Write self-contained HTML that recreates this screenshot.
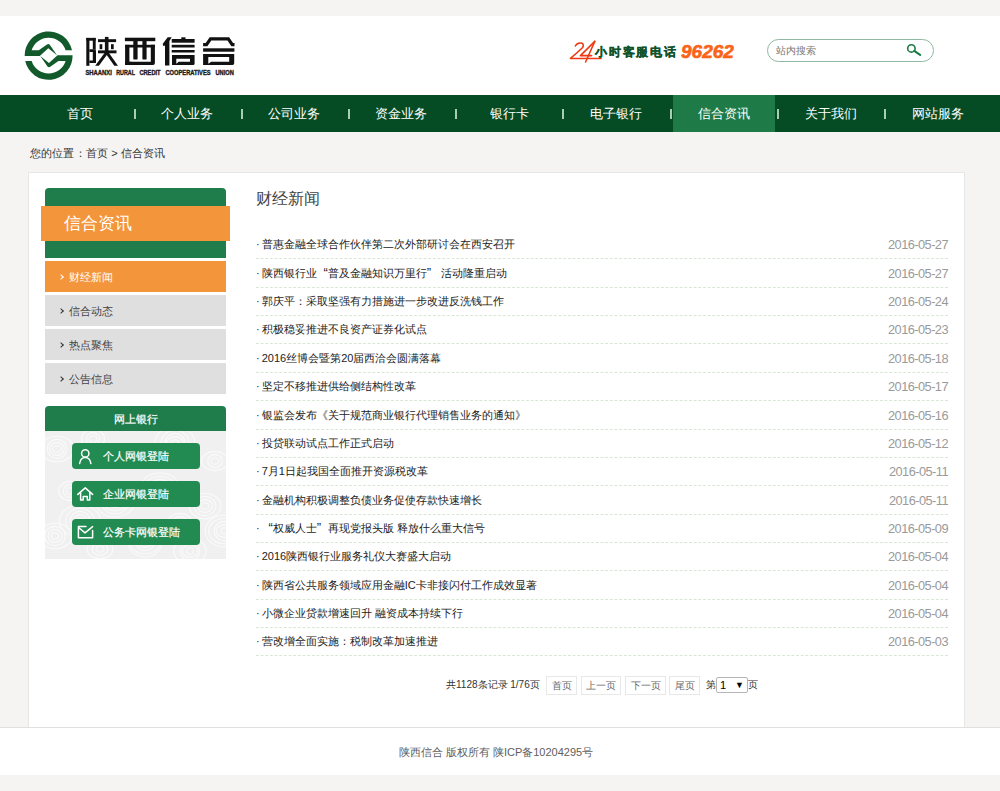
<!DOCTYPE html>
<html><head><meta charset="utf-8">
<style>
*{margin:0;padding:0;box-sizing:border-box}
html,body{width:1000px;height:791px;overflow:hidden;background:#f5f4f2;font-family:"Liberation Sans",sans-serif;color:#333}
.abs{position:absolute}
#header{position:absolute;left:0;top:16px;width:1000px;height:79px;background:#fff}
#nav{position:absolute;left:0;top:95px;width:1000px;height:37px;background:#054b23}
#nav .it{position:absolute;top:0;height:37px;line-height:38px;width:102px;text-align:center;color:#fff;font-size:13px}
#nav .on{background:#1e7b47}
#nav .sep{position:absolute;top:14px;width:2px;height:10px;background:#a8cdb0}
#crumb{position:absolute;left:30px;top:145px;font-size:11px;color:#333;line-height:16px;letter-spacing:0.15px}
#box{position:absolute;left:28px;top:172px;width:937px;height:560px;background:#fff;border:1px solid #e6e6e6}
#footer{position:absolute;left:0;top:727px;width:1000px;height:48px;background:#fff;border-top:1px solid #e0e0e0;text-align:center;font-size:11px;color:#5e5e5e;line-height:48px;padding-right:8px}
.logo-cn{position:absolute;left:84px;top:30px;font-size:35px;font-weight:900;letter-spacing:3px;color:#1a1a1a;line-height:40px}
.logo-en{position:absolute;left:86px;top:68px;font-size:7px;font-weight:bold;color:#1a1a1a;line-height:9px;letter-spacing:0.35px;white-space:nowrap}
.hot{position:absolute;left:595px;top:42px;font-size:12.4px;font-weight:bold;color:#11522a;line-height:20px;-webkit-text-stroke:0.3px #11522a;letter-spacing:1.75px}
.hot24{position:absolute;left:569px;top:38px;font-size:23px;font-style:italic;color:#e8431e;line-height:26px;letter-spacing:-3px}
.hotnum{position:absolute;left:681px;top:40px;font-size:19px;font-weight:bold;font-style:italic;color:#fa6418;line-height:24px;-webkit-text-stroke:0.6px #fa6418}
.search{position:absolute;left:767px;top:39px;width:167px;height:23px;border:1px solid #8fb9a0;border-radius:12px;background:#fff}
.search span{position:absolute;left:8px;top:0;line-height:21px;font-size:10px;color:#777}
/* sidebar */
.sbhead{position:absolute;left:45px;top:188px;width:181px;height:70px;background:#1e7d4a;border-radius:4px 4px 0 0}
.sbtitle{position:absolute;left:41px;top:206px;width:189px;height:35px;background:#f3953b;color:#fff;font-size:17px;line-height:36px;padding-left:23px}
.sbit{position:absolute;left:45px;width:181px;height:31px;background:#dfdfdf;font-size:10.8px;line-height:33px;color:#444;padding-left:24px}
.sbit:before{content:"";position:absolute;left:14px;top:14px;width:3px;height:3px;border-right:1px solid #333;border-top:1px solid #333;transform:rotate(45deg)}
.sbit.cur{background:#f3953b;color:#fff}
.sbit.cur:before{border-color:#fff}
.ebhead{position:absolute;left:45px;top:406px;width:181px;height:25px;background:#1e7d4a;border-radius:4px 4px 0 0;color:#fff;font-size:11px;line-height:27px;text-align:center;-webkit-text-stroke:0.2px #fff}
.ebbody{position:absolute;left:45px;top:431px;width:181px;height:128px;background:#f0f0f0;overflow:hidden}
.btn{position:absolute;left:72px;width:128px;height:26px;background:#218b52;border-radius:4px;color:#fff;font-size:11px;line-height:27px;padding-left:31px;-webkit-text-stroke:0.2px #fff}
.btn svg{position:absolute;left:5px;top:4px}
/* list */
.ctitle{position:absolute;left:256px;top:188px;font-size:16px;color:#444;line-height:22px}
.row{position:absolute;left:256px;width:692px;height:28.36px}
.row .t{position:absolute;top:0;line-height:28px;font-size:11px;color:#222;white-space:nowrap;left:-1px}
.row .d{position:absolute;right:0;top:0;line-height:28px;font-size:12.8px;color:#9a9a9a;letter-spacing:-0.55px;line-height:29px}
.row:after{content:"";position:absolute;left:0;top:28px;width:692px;height:1px;background-image:linear-gradient(to right,#d9e6d3 60%,transparent 60%);background-size:4.66px 1px}
.ql,.qr{font-style:normal;display:inline-block;width:11px;font-size:13px;line-height:10px}.ql{text-align:right}.qr{text-align:left}
.dt{font-weight:normal;position:relative;left:1px}
.pager{position:absolute;top:676px;height:18px;font-size:11px;line-height:18px;color:#333}
.pbtn{position:absolute;top:676px;height:19px;border:1px solid #e8e8e8;font-size:10px;line-height:18px;color:#6a6a6a;text-align:center}
.sel{position:absolute;left:716px;top:677px;width:32px;height:16px;border:1px solid #b5b5b5;border-radius:2px;font-size:11px;line-height:14px;padding-left:3px;color:#000}
</style></head>
<body>
<div id="header">
</div>
<svg class="abs" style="left:22px;top:29px" width="52" height="52" viewBox="0 0 791 791">
  <g fill="#125a2c">
  <path id="lp" d="M761 325 A364 364 0 0 0 41 410 L270 410 L400 292 L532 398 L422 238 Q402 220 380 236 L255 325 L147 325 A270 270 0 0 1 663 325 Z"/>
  <use href="#lp" transform="rotate(180 405 405)"/>
  </g>
</svg>
<svg class="abs" style="left:0;top:0" width="260" height="90" viewBox="0 0 260 90">
  <g fill="#111">
    <!-- 陕 -->
    <rect x="86.3" y="37.9" width="3.1" height="27.9"/>
    <rect x="86.3" y="37.9" width="9.4" height="2.8"/>
    <rect x="92.8" y="37.9" width="2.9" height="11.4"/>
    <path d="M89.4 49.2 L95.7 49.2 L96 51.7 L96 62.9 L89.4 62.9 L89.4 60.4 L92.8 60.4 L92.8 52.1 L89.4 52.1 Z"/>
    <rect x="98" y="39.2" width="18.1" height="2.9"/>
    <rect x="104.9" y="36.9" width="3.6" height="15"/>
    <rect x="99.6" y="44.2" width="2.7" height="5"/>
    <rect x="111" y="44.2" width="2.7" height="5"/>
    <rect x="98" y="50.4" width="18.5" height="2.9"/>
    <path d="M104.9 52.5 L108.6 52.5 L98.9 65.8 L95.2 65.8 Z"/>
    <path d="M105 52.5 L108.6 52.5 L118 65.8 L114.3 65.8 Z"/>
    <!-- 西 -->
    <rect x="124.9" y="37.7" width="30.4" height="3.5"/>
    <rect x="125.1" y="44.8" width="29.8" height="2.7"/>
    <rect x="125.1" y="44.8" width="4.3" height="20.2"/>
    <path d="M150.8 44.8 L154.9 44.8 L154.9 63 Q154.9 65 152.9 65 L125.1 65 L125.1 61.7 L150.8 61.7 Z"/>
    <path d="M129.4 63.2 L131.3 61.7 L129.4 61.7 Z"/>
    <path d="M133.3 41 L137.6 41 L137.6 58.4 Q137.6 59.6 136.4 59.6 L134.5 59.6 Q133.3 59.6 133.3 58.4 Z"/>
    <path d="M142.4 41 L146.6 41 L146.6 58.4 Q146.6 59.6 145.4 59.6 L143.6 59.6 Q142.4 59.6 142.4 58.4 Z"/>
    <!-- 信 -->
    <path d="M167.7 37.3 L171.7 37.3 L169.4 41 L169.4 65.4 L165 65.4 L165 45.8 L163 45.8 L162.8 43.8 Z"/>
    <rect x="181.3" y="37.3" width="4.2" height="2.5"/>
    <rect x="171.7" y="39" width="22.9" height="3.7"/>
    <rect x="171.7" y="44.8" width="22.9" height="2.7"/>
    <rect x="171.7" y="50" width="22.9" height="2.5"/>
    <path fill-rule="evenodd" d="M172 55 L194.6 55 L194.6 63.5 Q194.6 65 193.1 65 L172 65 Z M176.3 58.8 L190 58.8 L190 61.7 L178.8 61.7 L176.3 63.7 Z"/>
    <!-- 合 -->
    <path fill="none" stroke="#111" stroke-width="3.2" d="M203.1 44.7 L206.5 44.7 L210.5 38.8 L228.3 38.8 L232.2 44.7 L234.5 44.7"/>
    <rect x="203.1" y="48.3" width="31.3" height="3.4"/>
    <path fill-rule="evenodd" d="M203.1 54 L234.2 54 L234.2 63.3 Q234.2 65 232.5 65 L203.1 65 Z M208.3 57.1 L229.2 57.1 L229.2 61.7 L211.2 61.7 L208.3 63.8 Z"/>
  </g>
  <g font-family="Liberation Sans" font-weight="bold" font-size="6.8" fill="#1a1a1a" stroke="#1a1a1a" stroke-width="0.35">
    <text x="85.4" y="74.8" textLength="26.400000000000002" lengthAdjust="spacingAndGlyphs">SHAANXI</text>
    <text x="116.2" y="74.8" textLength="18.8" lengthAdjust="spacingAndGlyphs">RURAL</text>
    <text x="139.39999999999998" y="74.8" textLength="21.200000000000003" lengthAdjust="spacingAndGlyphs">CREDIT</text>
    <text x="165.39999999999998" y="74.8" textLength="45.2" lengthAdjust="spacingAndGlyphs">COOPERATIVES</text>
    <text x="215.39999999999998" y="74.8" textLength="18.400000000000002" lengthAdjust="spacingAndGlyphs">UNION</text>
  </g>
</svg>
<svg class="abs" style="left:560px;top:30px" width="50" height="40" viewBox="560 30 50 40">
  <g fill="none" stroke="#ee3a12" stroke-width="1.55" stroke-linejoin="round" stroke-linecap="round">
    <path d="M575.3 46 C576.6 43.6 579.2 42.8 581.3 43.1 C583.6 43.5 583.9 45.8 582.4 47.8 Q576.5 53.5 570.4 58.4 L601 58.4"/>
    <path d="M594.8 41.4 L580.4 55.6 L591.6 55.6"/>
    <path d="M594.8 41.4 L585.6 62"/>
  </g>
</svg>
<div class="hot">小时客服电话</div>
<div class="hotnum">96262</div>
<div class="search"><span>站内搜索</span>
<svg class="abs" style="left:138px;top:3px" width="18" height="14" viewBox="0 0 18 14"><circle cx="5.4" cy="5.4" r="3.7" fill="none" stroke="#1a7a45" stroke-width="1.6"/><path d="M8.3 7.9 L14.1 11.8" stroke="#1a7a45" stroke-width="2.1" stroke-linecap="round"/></svg>
</div>
<div id="nav">
  <div class="it" style="left:29px">首页</div>
  <div class="it" style="left:136px">个人业务</div>
  <div class="it" style="left:243px">公司业务</div>
  <div class="it" style="left:350px">资金业务</div>
  <div class="it" style="left:458px">银行卡</div>
  <div class="it" style="left:565px">电子银行</div>
  <div class="it on" style="left:673px">信合资讯</div>
  <div class="it" style="left:780px">关于我们</div>
  <div class="it" style="left:887px">网站服务</div>
  <div class="sep" style="left:134px"></div>
  <div class="sep" style="left:241px"></div>
  <div class="sep" style="left:348px"></div>
  <div class="sep" style="left:455px"></div>
  <div class="sep" style="left:562px"></div>
  <div class="sep" style="left:670px"></div>
  <div class="sep" style="left:777px"></div>
  <div class="sep" style="left:884px"></div>
</div>
<div id="crumb">您的位置：首页 &gt; 信合资讯</div>
<div id="box"></div>
<div class="sbhead"></div>
<div class="sbtitle">信合资讯</div>
<div class="sbit cur" style="top:261px">财经新闻</div>
<div class="sbit" style="top:295px">信合动态</div>
<div class="sbit" style="top:329px">热点聚焦</div>
<div class="sbit" style="top:363px">公告信息</div>
<div class="ebhead">网上银行</div>
<div class="ebbody"><svg width="181" height="128" viewBox="0 0 181 128"><g fill="none" stroke="#fafafa" stroke-width="1.1"><ellipse cx="12" cy="18" rx="4.4" ry="3.2"/><ellipse cx="12" cy="18" rx="7.4" ry="6.4"/><ellipse cx="12" cy="18" rx="9.8" ry="9.6"/><ellipse cx="12" cy="18" rx="17.0" ry="12.8"/><ellipse cx="48" cy="8" rx="3.7" ry="3.2"/><ellipse cx="48" cy="8" rx="6.5" ry="6.4"/><ellipse cx="48" cy="8" rx="11.5" ry="9.6"/><ellipse cx="88" cy="28" rx="3.3" ry="3.2"/><ellipse cx="88" cy="28" rx="7.5" ry="6.4"/><ellipse cx="88" cy="28" rx="10.5" ry="9.6"/><ellipse cx="130" cy="12" rx="3.7" ry="3.2"/><ellipse cx="130" cy="12" rx="8.5" ry="6.4"/><ellipse cx="130" cy="12" rx="10.1" ry="9.6"/><ellipse cx="130" cy="12" rx="13.9" ry="12.8"/><ellipse cx="130" cy="12" rx="20.0" ry="16.0"/><ellipse cx="170" cy="30" rx="3.9" ry="3.2"/><ellipse cx="170" cy="30" rx="7.4" ry="6.4"/><ellipse cx="170" cy="30" rx="13.3" ry="9.6"/><ellipse cx="25" cy="60" rx="3.9" ry="3.2"/><ellipse cx="25" cy="60" rx="6.7" ry="6.4"/><ellipse cx="25" cy="60" rx="11.2" ry="9.6"/><ellipse cx="70" cy="70" rx="3.4" ry="3.2"/><ellipse cx="70" cy="70" rx="7.2" ry="6.4"/><ellipse cx="70" cy="70" rx="12.7" ry="9.6"/><ellipse cx="70" cy="70" rx="13.7" ry="12.8"/><ellipse cx="70" cy="70" rx="19.7" ry="16.0"/><ellipse cx="115" cy="58" rx="3.4" ry="3.2"/><ellipse cx="115" cy="58" rx="6.6" ry="6.4"/><ellipse cx="115" cy="58" rx="12.3" ry="9.6"/><ellipse cx="115" cy="58" rx="15.7" ry="12.8"/><ellipse cx="115" cy="58" rx="20.0" ry="16.0"/><ellipse cx="160" cy="75" rx="4.1" ry="3.2"/><ellipse cx="160" cy="75" rx="7.5" ry="6.4"/><ellipse cx="160" cy="75" rx="10.8" ry="9.6"/><ellipse cx="160" cy="75" rx="15.8" ry="12.8"/><ellipse cx="10" cy="105" rx="3.7" ry="3.2"/><ellipse cx="10" cy="105" rx="7.0" ry="6.4"/><ellipse cx="10" cy="105" rx="10.3" ry="9.6"/><ellipse cx="10" cy="105" rx="16.8" ry="12.8"/><ellipse cx="55" cy="118" rx="3.9" ry="3.2"/><ellipse cx="55" cy="118" rx="7.7" ry="6.4"/><ellipse cx="55" cy="118" rx="13.0" ry="9.6"/><ellipse cx="100" cy="110" rx="3.8" ry="3.2"/><ellipse cx="100" cy="110" rx="8.0" ry="6.4"/><ellipse cx="100" cy="110" rx="9.9" ry="9.6"/><ellipse cx="100" cy="110" rx="15.4" ry="12.8"/><ellipse cx="100" cy="110" rx="17.1" ry="16.0"/><ellipse cx="145" cy="120" rx="3.4" ry="3.2"/><ellipse cx="145" cy="120" rx="7.7" ry="6.4"/><ellipse cx="145" cy="120" rx="9.8" ry="9.6"/><ellipse cx="145" cy="120" rx="16.2" ry="12.8"/><ellipse cx="180" cy="100" rx="3.9" ry="3.2"/><ellipse cx="180" cy="100" rx="8.6" ry="6.4"/><ellipse cx="180" cy="100" rx="10.8" ry="9.6"/><ellipse cx="180" cy="100" rx="16.4" ry="12.8"/><ellipse cx="180" cy="100" rx="19.8" ry="16.0"/><ellipse cx="35" cy="90" rx="4.2" ry="3.2"/><ellipse cx="35" cy="90" rx="6.6" ry="6.4"/><ellipse cx="35" cy="90" rx="10.0" ry="9.6"/><ellipse cx="35" cy="90" rx="14.2" ry="12.8"/><ellipse cx="35" cy="90" rx="20.5" ry="16.0"/><ellipse cx="135" cy="92" rx="3.3" ry="3.2"/><ellipse cx="135" cy="92" rx="8.2" ry="6.4"/><ellipse cx="135" cy="92" rx="12.1" ry="9.6"/></g></svg></div>
<div class="btn" style="top:443px">个人网银登陆</div>
<div class="btn" style="top:481px">企业网银登陆</div>
<div class="btn" style="top:519px">公务卡网银登陆</div>
<svg class="abs" style="left:0;top:0" width="120" height="560" viewBox="0 0 120 560">
  <g fill="none" stroke="#fff" stroke-width="1.5" stroke-linejoin="round" stroke-linecap="round">
    <circle cx="85.25" cy="453.4" r="3.7"/>
    <path d="M79.6 463.6 Q80.5 457.6 85.25 457.6 Q90 457.6 90.9 463.6"/>
    <path d="M77.8 494.4 L85.25 487.9 L92.6 494.4 M89.8 492 L89.8 500.1 L87.3 500.1 L87.3 496.6 L83.2 496.6 L83.2 500.1 L80.6 500.1 L80.6 492"/>
    <path d="M86 526.6 L78.4 526.6 L78.4 537.8 L92.6 537.8 L92.6 530.5 M79.2 528 L85 532.8 L92.6 526.6"/>
  </g>
</svg>
<div class="ctitle">财经新闻</div>
<div class="row" style="top:230.40px"><span class="t"><b class="dt">·</b> 普惠金融全球合作伙伴第二次外部研讨会在西安召开</span><span class="d">2016-05-27</span></div>
<div class="row" style="top:258.76px"><span class="t"><b class="dt">·</b> 陕西银行业<i class="ql">“</i>普及金融知识万里行<i class="qr">”</i> 活动隆重启动</span><span class="d">2016-05-27</span></div>
<div class="row" style="top:287.12px"><span class="t"><b class="dt">·</b> 郭庆平：采取坚强有力措施进一步改进反洗钱工作</span><span class="d">2016-05-24</span></div>
<div class="row" style="top:315.48px"><span class="t"><b class="dt">·</b> 积极稳妥推进不良资产证券化试点</span><span class="d">2016-05-23</span></div>
<div class="row" style="top:343.84px"><span class="t"><b class="dt">·</b> 2016丝博会暨第20届西洽会圆满落幕</span><span class="d">2016-05-18</span></div>
<div class="row" style="top:372.20px"><span class="t"><b class="dt">·</b> 坚定不移推进供给侧结构性改革</span><span class="d">2016-05-17</span></div>
<div class="row" style="top:400.56px"><span class="t"><b class="dt">·</b> 银监会发布《关于规范商业银行代理销售业务的通知》</span><span class="d">2016-05-16</span></div>
<div class="row" style="top:428.92px"><span class="t"><b class="dt">·</b> 投贷联动试点工作正式启动</span><span class="d">2016-05-12</span></div>
<div class="row" style="top:457.28px"><span class="t"><b class="dt">·</b> 7月1日起我国全面推开资源税改革</span><span class="d">2016-05-11</span></div>
<div class="row" style="top:485.64px"><span class="t"><b class="dt">·</b> 金融机构积极调整负债业务促使存款快速增长</span><span class="d">2016-05-11</span></div>
<div class="row" style="top:514.00px"><span class="t"><b class="dt">·</b> <i class="ql">“</i>权威人士<i class="qr">”</i>再现党报头版 释放什么重大信号</span><span class="d">2016-05-09</span></div>
<div class="row" style="top:542.36px"><span class="t"><b class="dt">·</b> 2016陕西银行业服务礼仪大赛盛大启动</span><span class="d">2016-05-04</span></div>
<div class="row" style="top:570.72px"><span class="t"><b class="dt">·</b> 陕西省公共服务领域应用金融IC卡非接闪付工作成效显著</span><span class="d">2016-05-04</span></div>
<div class="row" style="top:599.08px"><span class="t"><b class="dt">·</b> 小微企业贷款增速回升 融资成本持续下行</span><span class="d">2016-05-04</span></div>
<div class="row" style="top:627.44px"><span class="t"><b class="dt">·</b> 营改增全面实施：税制改革加速推进</span><span class="d">2016-05-03</span></div>
<div class="pager" style="left:446px;letter-spacing:0;font-size:10px">共1128条记录 1/76页</div>
<div class="pbtn" style="left:546px;width:31px">首页</div>
<div class="pbtn" style="left:581px;width:40px">上一页</div>
<div class="pbtn" style="left:625px;width:41px">下一页</div>
<div class="pbtn" style="left:669px;width:31px">尾页</div>
<div class="pager" style="left:706px;font-size:10px">第</div>
<div class="sel">1 <span style="position:absolute;right:3px;top:0;font-size:9px">▼</span></div>
<div class="pager" style="left:748px;font-size:10px">页</div>
<div id="footer">陕西信合 版权所有 陕ICP备10204295号</div>
</body></html>
